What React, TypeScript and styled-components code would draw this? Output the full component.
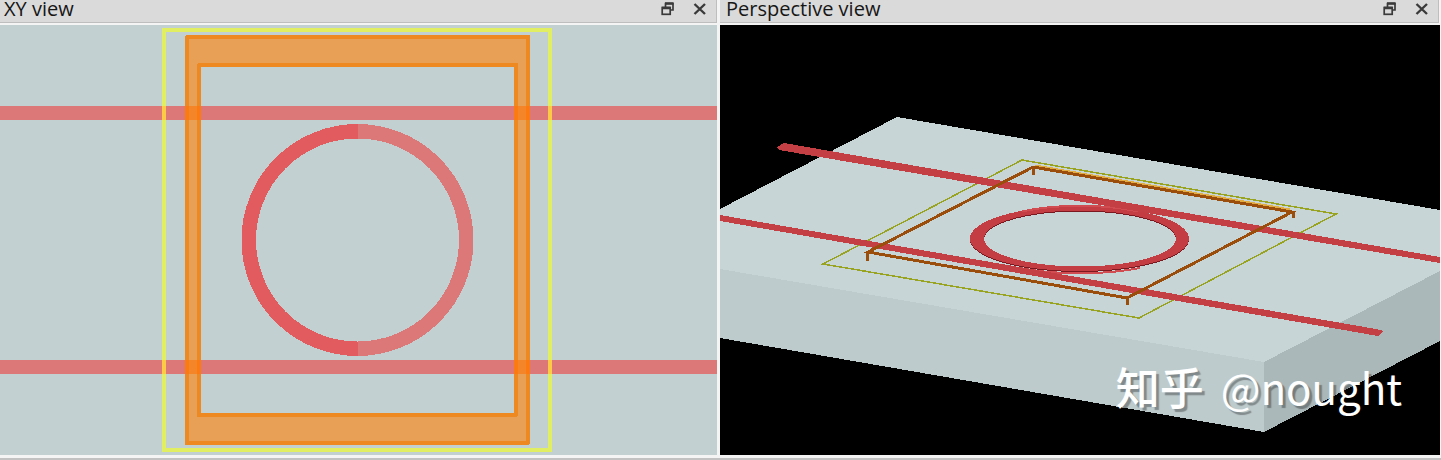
import React from "react";
import styled, { createGlobalStyle } from "styled-components";

const GlobalStyle = createGlobalStyle`
  * { box-sizing: border-box; }
  body {
    margin: 0;
    background: #f4f4f4;
    font-family: "Open Sans", "Noto Sans", "Noto Sans CJK SC", sans-serif;
  }
`;

const Workspace = styled.main`
  display: grid;
  grid-template-columns: 717fr 720fr;
  column-gap: 3px;
  padding-right: 1px;
`;

const Panel = styled.section`
  display: flex;
  flex-direction: column;
  min-width: 0;
`;

const TitleBar = styled.header<{ $inset: number; $edge: number }>`
  display: flex;
  align-items: center;
  height: 23px;
  margin: 0 ${(p) => p.$edge}px 2px 0;
  padding: 0 8px 4px ${(p) => p.$inset}px;
  background: #dadada;
  border-right: 1px solid #bebebe;
  border-bottom: 1px solid #bebebe;
`;

const Title = styled.h2`
  flex: 1;
  margin: 0;
  color: #161616;
  font-size: 20px;
  font-weight: 400;
  line-height: 20px;
  white-space: nowrap;
`;

const Actions = styled.div`
  display: flex;
  gap: 16px;
`;

const IconButton = styled.button`
  display: block;
  width: 16px;
  height: 16px;
  padding: 0;
  border: 0;
  background: none;
  color: #3a3a3a;
  cursor: pointer;
`;

const Viewport = styled.div<{ $color: string }>`
  position: relative;
  background: ${(p) => p.$color};
  overflow: hidden;
`;

const Drawing = styled.svg`
  display: block;
  width: 100%;
  height: auto;
  shape-rendering: crispEdges;
`;

const Watermark = styled.p`
  position: absolute;
  right: 38px;
  bottom: 40px;
  display: flex;
  align-items: baseline;
  gap: 17px;
  margin: 0;
  color: #fff;
  font-family: "Noto Sans CJK SC", sans-serif;
  font-size: 42px;
  line-height: 56px;
  white-space: nowrap;
  text-shadow: 3px 3px 1px rgba(0, 0, 0, 0.32);
`;

const Brand = styled.span`
  font-size: 44px;
  font-weight: 500;
`;

const StatusEdge = styled.footer`
  height: 2px;
  margin-top: 3px;
  background: #c2c2c2;
`;

function FloatIcon() {
  return (
    <svg width="16" height="16" viewBox="0 0 16 16" fill="none" stroke="currentColor" aria-hidden="true">
      <path d="M5.500 6V2.500H13V9H10.500" strokeWidth="1.700" />
      <path d="M5 2.500H13.500" strokeWidth="2.500" />
      <rect x="2.200" y="6.500" width="8" height="6.800" strokeWidth="1.700" />
      <path d="M2 7H10.500" strokeWidth="2.500" />
    </svg>
  );
}

function CloseIcon() {
  return (
    <svg width="16" height="16" viewBox="0 0 16 16" fill="none" stroke="currentColor" aria-hidden="true">
      <path d="M2.500 3L13 13M13 3L2.500 13" strokeWidth="2.400" />
    </svg>
  );
}

function PanelHeader({ title, inset, edge }: { title: string; inset: number; edge: number }) {
  return (
    <TitleBar $inset={inset} $edge={edge}>
      <Title>{title}</Title>
      <Actions>
        <IconButton type="button" aria-label={`Float ${title}`}><FloatIcon /></IconButton>
        <IconButton type="button" aria-label={`Close ${title}`}><CloseIcon /></IconButton>
      </Actions>
    </TitleBar>
  );
}

function PlanDrawing() {
  return (
    <Drawing viewBox="0 25 717 430" role="img" aria-label="Ring resonator seen from above">
      <path d="M0 106H717V120H0ZM0 360H717V374H0Z" fill="#dd7879" />
      <path d="M187 37H528V443H187ZM199 65V415H516V65Z" fillRule="evenodd" fill="#e7a055" stroke="#ee8820" strokeWidth="4" strokeLinejoin="round" />
      <path d="M185 106H201V120H185ZM514 106H530V120H514ZM185 360H201V374H185ZM514 360H530V374H514Z" fill="#f58529" />
      <path d="M185 106H189V120H185ZM197 106H201V120H197ZM514 106H518V120H514ZM526 106H530V120H526ZM185 360H189V374H185ZM197 360H201V374H197ZM514 360H518V374H514ZM526 360H530V374H526Z" fill="#fb7a12" />
      <rect x="164" y="30" width="386" height="420" fill="none" stroke="#e2ee62" strokeWidth="4" />
      <path d="M162 106h4v14h-4zM548 106h4v14h-4zM162 360h4v14h-4zM548 360h4v14h-4z" fill="#fdca45" />
      <path d="M357.500 131.250A108.750 108.750 0 0 0 357.500 348.750" fill="none" stroke="#e25b5e" strokeWidth="14.500" />
      <path d="M357.500 131.250A108.750 108.750 0 0 1 357.500 348.750" fill="none" stroke="#dd7879" strokeWidth="14.500" />
    </Drawing>
  );
}

const RING = "M970 238.500A109.500 32.500 0 0 1 1189 238.500A109.500 32.500 0 0 1 970 238.500ZM984 238.500A96 28 0 0 0 1176 238.500A96 28 0 0 0 984 238.500Z";

function PerspectiveDrawing() {
  return (
    <Drawing viewBox="720 25 720 430" role="img" aria-label="Ring resonator on its substrate in perspective">
      <path d="M720 209L897 117L1440 210V272L1264 363L720 270Z" fill="#c8d5d7" />
      <path d="M720 269L1264 362V432L720 338Z" fill="#becbcd" />
      <path d="M1264 362L1440 271V341L1264 432Z" fill="#abb8ba" />
      <path d="M1022 160L1336 214L1139 318L823 264Z" fill="none" stroke="#98a31f" strokeWidth="1.500" />
      <path d="M1035 165.500L1290 209.500" stroke="#e2ac42" strokeWidth="2" />
      <path fillRule="evenodd" fill="#7c1920" transform="translate(0 1)" d={RING} />
      <path fillRule="evenodd" fill="#c43d42" d={RING} />
      <path d="M1022 211.500A96 28 0 0 1 1138 211.500M1020 268A109.500 32.500 0 0 0 1140 268" fill="none" stroke="#d04c50" strokeWidth="2" />
      <path d="M777 147L784 143L1440 257V263L779 150Z" fill="#c33f43" />
      <path d="M720 215L1376 329L1384 331L1378 336L720 221Z" fill="#c33f43" />
      <path d="M1033 167L1292 212L1127 298L868 252Z" fill="none" stroke="#9b4d0b" strokeWidth="3" />
      <path d="M1033 167V175M1293 211V218M1127 297V305M867 252V261" stroke="#9b4d0b" strokeWidth="3" />
    </Drawing>
  );
}

export default function App() {
  return (
    <>
      <GlobalStyle />
      <Workspace>
        <Panel>
          <PanelHeader title="XY view" inset={4} edge={0} />
          <Viewport $color="#c3d0d2"><PlanDrawing /></Viewport>
        </Panel>
        <Panel>
          <PanelHeader title="Perspective view" inset={6} edge={1} />
          <Viewport $color="#000">
            <PerspectiveDrawing />
            <Watermark><Brand>知乎</Brand><span>@nought</span></Watermark>
          </Viewport>
        </Panel>
      </Workspace>
      <StatusEdge />
    </>
  );
}
